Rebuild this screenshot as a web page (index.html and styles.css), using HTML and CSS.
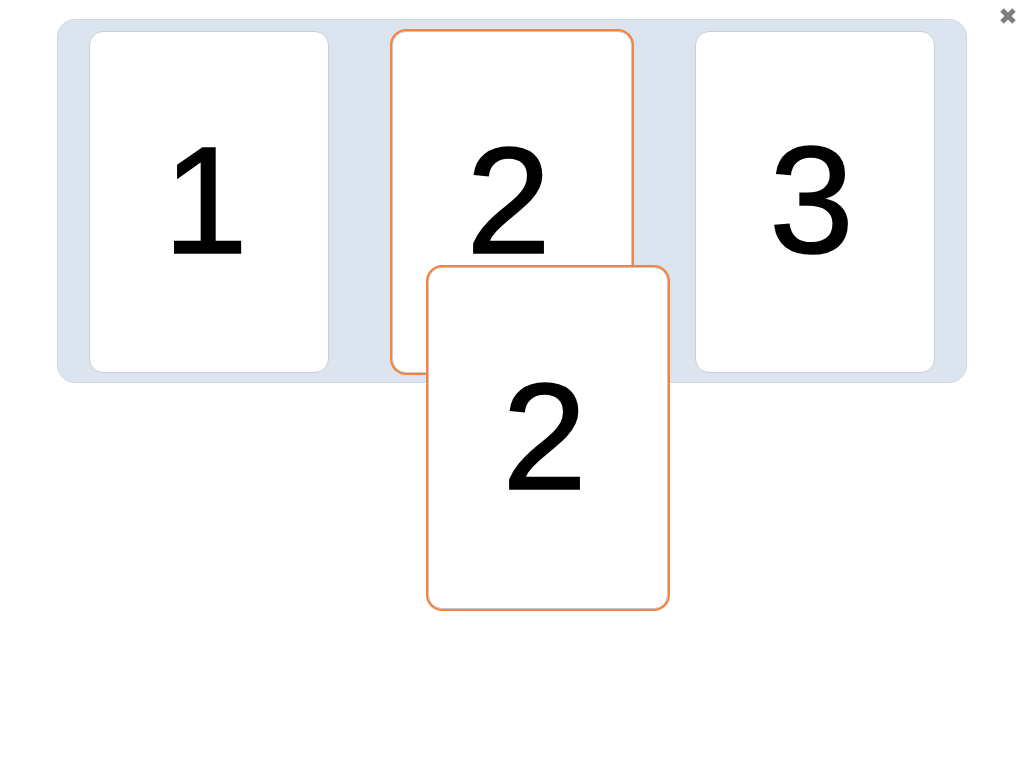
FILE: index.html
```html
<!DOCTYPE html>
<html>
<head>
<meta charset="utf-8">
<link rel="stylesheet" href="styles.css">
</head>
<body>
<div class="stage">
  <div class="tray">
    <div class="card"><span class="digit">1</span></div>
    <div class="card card-selected"><span class="digit">2</span></div>
    <div class="card"><span class="digit">3</span></div>
  </div>
  <div class="card card-selected card-drag"><span class="digit">2</span></div>
  <button class="close" aria-label="close">
    <svg width="18" height="18" viewBox="0 0 18 18"><path d="M3 3 L15 15 M15 3 L3 15" stroke="#7d7d7d" stroke-width="5" stroke-linecap="butt"/></svg>
  </button>
</div>
</body>
</html>
```
FILE: styles.css
```css
html, body {
  margin: 0;
  padding: 0;
  background: #ffffff;
  font-family: "Liberation Sans", Arial, sans-serif;
}
.stage {
  position: relative;
  width: 1024px;
  height: 768px;
  padding-top: 19px;
  box-sizing: border-box;
}
.tray {
  margin-left: 57px;
  width: 910px;
  height: 364px;
  box-sizing: border-box;
  background: #dce5ef;
  border: 1px solid #cdd7e3;
  border-radius: 18px;
  padding: 11px 31px;
  display: flex;
  justify-content: space-between;
  align-items: flex-start;
}
.card {
  width: 240px;
  height: 342px;
  box-sizing: border-box;
  background: #ffffff;
  border: 1px solid #c6ced8;
  border-radius: 14px;
  display: flex;
  align-items: center;
  justify-content: center;
}
.card-selected {
  box-shadow: 0 0 0 2px #f6843f;
  border-color: #c2c9d2;
}
.digit {
  font-size: 152px;
  line-height: 1;
  color: #000000;
  -webkit-text-stroke: 1.6px #000000;
  margin-top: -4px;
  margin-right: 7px;
}
.card-drag {
  position: absolute;
  left: 428px;
  top: 267px;
  width: 240px;
  height: 342px;
}
.close {
  position: absolute;
  top: 7px;
  right: 7px;
  width: 18px;
  height: 18px;
  padding: 0;
  border: 0;
  background: none;
  display: block;
}
.close svg {
  display: block;
}
```
